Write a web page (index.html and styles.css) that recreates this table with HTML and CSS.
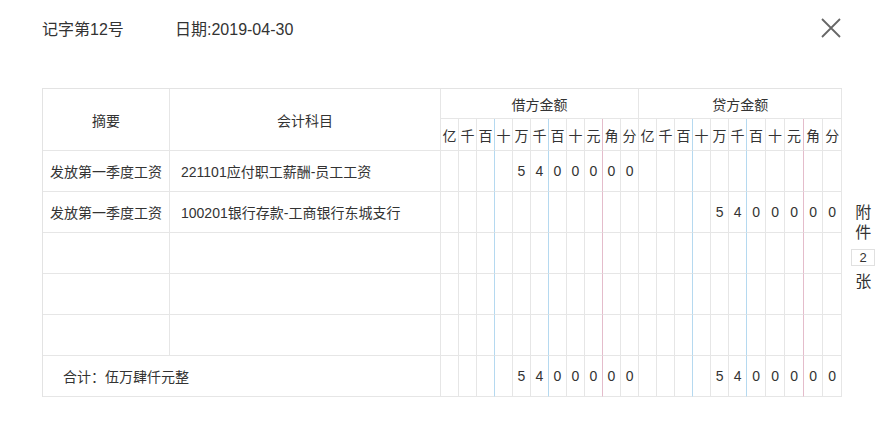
FILE: index.html
```html
<!DOCTYPE html>
<html lang="zh-CN">
<head>
<meta charset="utf-8">
<title>凭证</title>
<link rel="stylesheet" href="styles.css">
</head>
<body>
<div class="dialog">
  <div class="head">
    <span class="title">记字第12号</span>
    <span class="date">日期:2019-04-30</span>
  </div>
  <button class="close" aria-label="关闭">
    <svg width="20" height="20" viewBox="0 0 20 20"><path d="M1 1L19 19M19 1L1 19" stroke="#666" stroke-width="1.8" fill="none"/></svg>
  </button>
  <div class="voucher">
    <table class="grid">
      <colgroup>
        <col class="c-sum"><col class="c-acc">
        <col class="d"><col class="d"><col class="d"><col class="d"><col class="d"><col class="d"><col class="d"><col class="d"><col class="d"><col class="d"><col class="d">
        <col class="d"><col class="d"><col class="d"><col class="d"><col class="d"><col class="d"><col class="d19"><col class="d19"><col class="d19"><col class="d19"><col class="d19">
      </colgroup>
      <thead>
        <tr class="h1">
          <th rowspan="2">摘要</th>
          <th rowspan="2">会计科目</th>
          <th colspan="11">借方金额</th>
          <th colspan="11">贷方金额</th>
        </tr>
        <tr class="h2">
          <th>亿</th><th>千</th><th class="b">百</th><th>十</th><th>万</th><th class="b">千</th><th>百</th><th>十</th><th class="r">元</th><th>角</th><th>分</th>
          <th>亿</th><th>千</th><th class="b">百</th><th>十</th><th>万</th><th class="b">千</th><th>百</th><th>十</th><th class="r">元</th><th>角</th><th>分</th>
        </tr>
      </thead>
      <tbody>
        <tr class="row">
          <td class="txt">发放第一季度工资</td>
          <td class="txt acc">221101应付职工薪酬-员工工资</td>
          <td></td><td></td><td class="b"></td><td></td><td>5</td><td class="b">4</td><td>0</td><td>0</td><td class="r">0</td><td>0</td><td>0</td>
          <td></td><td></td><td class="b"></td><td></td><td></td><td class="b"></td><td></td><td></td><td class="r"></td><td></td><td></td>
        </tr>
        <tr class="row">
          <td class="txt">发放第一季度工资</td>
          <td class="txt acc">100201银行存款-工商银行东城支行</td>
          <td></td><td></td><td class="b"></td><td></td><td></td><td class="b"></td><td></td><td></td><td class="r"></td><td></td><td></td>
          <td></td><td></td><td class="b"></td><td></td><td>5</td><td class="b">4</td><td>0</td><td>0</td><td class="r">0</td><td>0</td><td>0</td>
        </tr>
        <tr class="row">
          <td></td><td></td>
          <td></td><td></td><td class="b"></td><td></td><td></td><td class="b"></td><td></td><td></td><td class="r"></td><td></td><td></td>
          <td></td><td></td><td class="b"></td><td></td><td></td><td class="b"></td><td></td><td></td><td class="r"></td><td></td><td></td>
        </tr>
        <tr class="row">
          <td></td><td></td>
          <td></td><td></td><td class="b"></td><td></td><td></td><td class="b"></td><td></td><td></td><td class="r"></td><td></td><td></td>
          <td></td><td></td><td class="b"></td><td></td><td></td><td class="b"></td><td></td><td></td><td class="r"></td><td></td><td></td>
        </tr>
        <tr class="row">
          <td></td><td></td>
          <td></td><td></td><td class="b"></td><td></td><td></td><td class="b"></td><td></td><td></td><td class="r"></td><td></td><td></td>
          <td></td><td></td><td class="b"></td><td></td><td></td><td class="b"></td><td></td><td></td><td class="r"></td><td></td><td></td>
        </tr>
        <tr class="row total">
          <td class="txt tot" colspan="2">合计：伍万肆仟元整</td>
          <td></td><td></td><td class="b"></td><td></td><td>5</td><td class="b">4</td><td>0</td><td>0</td><td class="r">0</td><td>0</td><td>0</td>
          <td></td><td></td><td class="b"></td><td></td><td>5</td><td class="b">4</td><td>0</td><td>0</td><td class="r">0</td><td>0</td><td>0</td>
        </tr>
      </tbody>
    </table>
    <div class="attach">
      <span class="ch">附</span>
      <span class="ch">件</span>
      <span class="count">2</span>
      <span class="ch zhang">张</span>
    </div>
  </div>
</div>
</body>
</html>
```

FILE: styles.css
```css
* { box-sizing: border-box; }
html, body { margin: 0; background: #fff; }
body {
  font-family: "Liberation Sans", "Noto Sans CJK SC", sans-serif;
  color: #333;
}
.dialog {
  position: relative;
  width: 879px;
  height: 434px;
  padding: 20px 0 0 42px;
}
.head {
  display: flex;
  height: 20px;
  line-height: 20px;
  font-size: 16px;
}
.title { width: 133px; }
.close {
  position: absolute;
  top: 18px;
  left: 821px;
  width: 20px;
  height: 20px;
  padding: 0;
  border: 0;
  background: none;
}
.close svg { display: block; }
.voucher {
  display: flex;
  align-items: center;
  margin-top: 48px;
}
.grid {
  width: 799px;
  table-layout: fixed;
  border-collapse: separate;
  border-spacing: 0;
  border-top: 1px solid #e3e3e3;
  border-left: 1px solid #e3e3e3;
  font-size: 14px;
  flex: none;
}
.c-sum { width: 127px; }
.c-acc { width: 271px; }
.d { width: 18px; }
.d19 { width: 19px; }
.grid th, .grid td {
  padding: 0;
  border-right: 1px solid #e6e6e6;
  border-bottom: 1px solid #e6e6e6;
  font-weight: normal;
  text-align: center;
  vertical-align: middle;
  white-space: nowrap;
  overflow: hidden;
}
.grid .b { border-right-color: #b5d9f0; }
.grid .r { border-right-color: #e4bccb; }
.h1 { height: 30px; }
.h2 { height: 32px; }
.row { height: 41px; }
.grid td.txt { text-align: left; padding-left: 7px; }
.grid td.acc { padding-left: 11px; }
.grid td.tot { padding-left: 20px; }
.attach {
  width: 24px;
  margin-left: 9px;
  padding-top: 9px;
  display: flex;
  flex-direction: column;
  align-items: center;
  font-size: 16px;
}
.ch { line-height: 20px; }
.count {
  width: 24px;
  height: 17px;
  margin: 6px 0;
  border: 1px solid #e0e0e0;
  font-size: 13px;
  line-height: 15px;
  text-align: center;
}
```
